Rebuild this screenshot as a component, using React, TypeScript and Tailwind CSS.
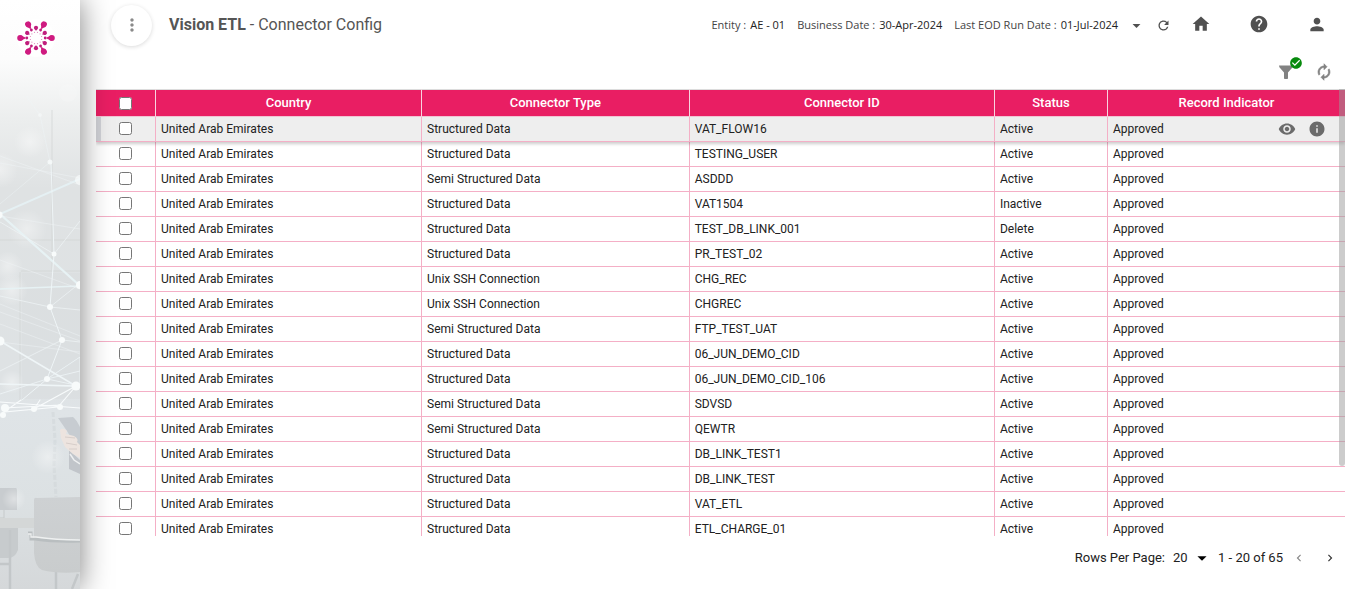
import type { ReactNode } from "react";
import {
  MdArrowDropDown,
  MdCheckCircle,
  MdChevronLeft,
  MdChevronRight,
  MdHelp,
  MdHome,
  MdInfo,
  MdMoreVert,
  MdPerson,
  MdRefresh,
  MdVisibility,
} from "react-icons/md";

type Connector = { type: string; id: string; status: string };

const S = "Structured Data";
const SS = "Semi Structured Data";
const U = "Unix SSH Connection";

const connectors: Connector[] = [
  { type: S, id: "VAT_FLOW16", status: "Active" },
  { type: S, id: "TESTING_USER", status: "Active" },
  { type: SS, id: "ASDDD", status: "Active" },
  { type: S, id: "VAT1504", status: "Inactive" },
  { type: S, id: "TEST_DB_LINK_001", status: "Delete" },
  { type: S, id: "PR_TEST_02", status: "Active" },
  { type: U, id: "CHG_REC", status: "Active" },
  { type: U, id: "CHGREC", status: "Active" },
  { type: SS, id: "FTP_TEST_UAT", status: "Active" },
  { type: S, id: "06_JUN_DEMO_CID", status: "Active" },
  { type: S, id: "06_JUN_DEMO_CID_106", status: "Active" },
  { type: SS, id: "SDVSD", status: "Active" },
  { type: SS, id: "QEWTR", status: "Active" },
  { type: S, id: "DB_LINK_TEST1", status: "Active" },
  { type: S, id: "DB_LINK_TEST", status: "Active" },
  { type: S, id: "VAT_ETL", status: "Active" },
  { type: S, id: "ETL_CHARGE_01", status: "Active" },
];

function Logo() {
  return (
    <svg viewBox="0 0 40 40" className="size-10" role="img" aria-label="Vision home">
      <circle cx="20" cy="20" r="19" fill="#fff" />
      {[0, 60, 120, 180, 240, 300].map((a) => (
        <g key={a} transform={`rotate(${a} 20 20)`} fill="#cf1b80">
          <circle cx="35.8" cy="20" r="3" />
          <path d="M35 17.6 L30.6 19.6 V20.4 L35 22.4 Z" />
        </g>
      ))}
      {[15, 45, 75, 105, 135, 165, 195, 225, 255, 285, 315, 345].map((a) => (
        <circle key={a} cx="25.8" cy="20" r="0.6" fill="#c01f7d" opacity="0.5" transform={`rotate(${a} 20 20)`} />
      ))}
      {[30, 90, 150, 210, 270, 330].map((a) => (
        <g key={a} transform={`rotate(${a} 20 20)`} fill="#c01f7d">
          <circle cx="30.2" cy="20" r="2.1" />
          <path d="M29.6 18.6 L27 20 L29.6 21.4 Z" />
        </g>
      ))}
      {[0, 60, 120, 180, 240, 300].map((a) => (
        <circle key={a} cx="29.2" cy="20" r="1.4" fill="#c01f7d" transform={`rotate(${a} 20 20)`} />
      ))}
    </svg>
  );
}

function FunnelIcon() {
  return (
    <svg viewBox="0 0 14 14" className="size-3.5" fill="currentColor" aria-hidden="true">
      <path d="M0 0.5H14L13.6 2.2L9 7.5V13.2Q9 14 8.2 14H5.8Q5 14 5 13.2V7.5L0.4 2.2Z" />
    </svg>
  );
}

function RenewIcon() {
  return (
    <svg viewBox="0 0 24 24" className="size-[18px]" fill="currentColor" stroke="currentColor" strokeWidth="0.8" aria-hidden="true">
      <path d="M12 6v3l4-4-4-4v3c-4.42 0-8 3.58-8 8 0 1.57.46 3.03 1.24 4.26L6.7 14.8A5.87 5.87 0 0 1 6 12c0-3.31 2.69-6 6-6z" />
      <path d="M18.76 7.74L17.3 9.2c.44.84.7 1.79.7 2.8 0 3.31-2.69 6-6 6v-3l-4 4 4 4v-3c4.42 0 8-3.58 8-8 0-1.57-.46-3.03-1.24-4.26z" />
    </svg>
  );
}

function SidebarArt() {
  return (
    <svg viewBox="0 0 80 589" preserveAspectRatio="none" className="absolute inset-0 h-full w-full" aria-hidden="true">
      <defs>
        <linearGradient id="base" x1="0" y1="0" x2="0" y2="1">
          <stop offset="0" stopColor="#ffffff" />
          <stop offset="0.1" stopColor="#fcfcfc" />
          <stop offset="0.2" stopColor="#eceeee" />
          <stop offset="0.32" stopColor="#dfe2e3" />
          <stop offset="0.65" stopColor="#dee2e4" />
          <stop offset="0.7" stopColor="#dfe4e7" />
          <stop offset="0.85" stopColor="#dce1e3" />
          <stop offset="1" stopColor="#d5d8da" />
        </linearGradient>
        <radialGradient id="glow">
          <stop offset="0" stopColor="#fff" stopOpacity="0.4" />
          <stop offset="1" stopColor="#fff" stopOpacity="0" />
        </radialGradient>
        <linearGradient id="chair" x1="0" y1="0" x2="0" y2="1">
          <stop offset="0" stopColor="#ced1d3" />
          <stop offset="1" stopColor="#c9cccd" />
        </linearGradient>
      </defs>
      <rect width="80" height="589" fill="url(#base)" />
      <path d="M52 110V272M0 240H80M20 272V400M21 271H80" stroke="#d1d5d6" strokeWidth="1.5" fill="none" opacity="0.5" />
      <rect x="22" y="273" width="58" height="126" fill="#d9dddf" opacity="0.55" />
      <circle cx="68" cy="93" r="9" fill="#fff" opacity="0.15" />
      <circle cx="30" cy="142" r="16" fill="url(#glow)" />
      <circle cx="0" cy="170" r="18" fill="url(#glow)" />
      <circle cx="27" cy="229" r="20" fill="url(#glow)" />
      <circle cx="8" cy="266" r="15" fill="url(#glow)" />
      <circle cx="12" cy="290" r="16" fill="url(#glow)" />
      <circle cx="12" cy="382" r="12" fill="url(#glow)" />
      <g fill="none" stroke="#eff5f7" strokeLinecap="round">
        <path d="M27 97L40 115L50 162L0 204" strokeWidth="0.7" opacity="0.6" />
        <path d="M80 179L0 214" strokeWidth="2" stroke="#e5f0f3" />
        <path d="M0 214L79 285" strokeWidth="2.2" stroke="#e7f2f4" />
        <path d="M0 289L79 286" strokeWidth="1.6" stroke="#e7f2f4" />
        <path d="M51 162L54 254L50 307L62 340L47 379L22 400" strokeWidth="1" />
        <path d="M80 221L54 254L0 222M80 283L50 307L0 296M50 307L80 310" strokeWidth="0.7" />
        <path d="M0 156L80 185M0 163L80 178M0 216L80 229M0 260L80 289M0 304L80 336M0 312L80 341M0 324L80 354M0 342L80 352" strokeWidth="0.7" opacity="0.65" />
        <path d="M0 371L62 340M62 340L80 342" strokeWidth="0.7" />
        <path d="M0 384L76 386L0 341" strokeWidth="1.7" />
        <path d="M47 379L80 386L80 357L47 379L80 371M0 394L47 379" strokeWidth="0.8" />
        <path d="M76 386L58 407L4 412L21 400M76 386L32 410M0 402L80 408M4 408L60 405M40 400L34 409" strokeWidth="1.1" stroke="#f8fbfc" />
      </g>
      <g fill="#f8fbfb">
        <circle cx="40" cy="115" r="2" opacity="0.5" />
        <circle cx="50" cy="162" r="2.5" opacity="0.8" />
        <circle cx="80" cy="180" r="5" opacity="0.7" />
        <circle cx="-1" cy="215" r="3.5" />
        <circle cx="54" cy="254" r="2.5" />
        <circle cx="80" cy="285" r="4" />
        <circle cx="50" cy="307" r="3" />
        <circle cx="62" cy="340" r="3" />
        <circle cx="0" cy="341" r="4.5" />
        <circle cx="47" cy="379" r="3" />
        <circle cx="76" cy="386" r="4.5" />
        <circle cx="5" cy="408" r="4" />
        <circle cx="3" cy="415" r="3" />
        <circle cx="34" cy="409" r="3" />
        <circle cx="60" cy="407" r="3" />
      </g>
      <path d="M53 412L55 440L54 465L56 497" stroke="#c9ced1" strokeWidth="3" strokeDasharray="5 2" fill="none" opacity="0.35" />
      <circle cx="48" cy="457" r="17" fill="url(#glow)" />
      <path d="M69 450L80 460V474L69 469Z" fill="#c1c5ca" />
      <path d="M70 454L74 460L80 464" stroke="#eef0f1" strokeWidth="1.5" fill="none" />
      <path d="M58 418L73 417Q76 419 80 427V456L77 448L67 431Z" fill="#c7ccd1" />
      <path d="M60 430Q63 427 67 431L66 434L74 436Q79 439 77 442L80 445V458L73 454L65 447L61 438Z" fill="#ede4df" />
      <path d="M65 437L75 438M66 443L77 445M69 449L77 449" stroke="#d7ceca" strokeWidth="1" />
      <path d="M0 488H16Q17 488 17 491V510H0Z" fill="#c8cccf" />
      <circle cx="14" cy="499" r="12" fill="url(#glow)" />
      <path d="M4 510V518H0" stroke="#c6cacb" fill="none" />
      <rect x="0" y="518" width="34" height="10" fill="#d4d7d7" />
      <path d="M0 528H18V550Q15 558 8 558H0Z" fill="#c7cbcd" />
      <path d="M10 530V589M0 564H10M56 572V589M78 574L72 589" stroke="#c3c7c9" strokeWidth="2.5" fill="none" />
      <path d="M34 500Q34 497 37 498L80 497V572Q58 574 42 570Q35 567 34 553Z" fill="url(#chair)" />
      <path d="M28 533H31V539H35Q55 542 80 541" stroke="#b9bec0" strokeWidth="3" fill="none" />
      <path d="M28 534H31V537H36Q56 540 80 540" stroke="#eef0f0" strokeWidth="1.3" fill="none" />
    </svg>
  );
}

function IconButton({ label, children, className = "" }: { label: string; children: ReactNode; className?: string }) {
  return (
    <button type="button" aria-label={label} className={`flex shrink-0 items-center justify-center ${className}`}>
      {children}
    </button>
  );
}

function Tick({ label }: { label: string }) {
  return <input type="checkbox" aria-label={label} className="mx-auto block size-[13px]" />;
}

function Fact({ label, value }: { label: string; value: string }) {
  return (
    <span className="flex gap-1">
      <span>{label} :</span>
      <span className="font-medium text-[#222]">{value}</span>
    </span>
  );
}

const th = "border-y border-r border-t-[#dcdcdc] border-b-[#f3c6d5] border-r-[#f8d3df] p-0 text-[13px] font-medium last:border-r-0";
const td = "h-[25px] border-b border-r border-[#f4afc6] py-0 pl-[5px] pr-2 last:border-r-0";

export default function App() {
  return (
    <div className="flex h-screen overflow-hidden bg-white font-['Roboto',sans-serif] text-[#212121]">
      <aside className="relative z-10 w-20 shrink-0 shadow-[0_0_30px_rgba(0,0,0,0.5)]">
        <SidebarArt />
        <a href="#home" className="relative mx-auto mt-[18px] block w-10 -translate-x-1">
          <Logo />
        </a>
      </aside>

      <main className="flex min-w-0 flex-1 flex-col pl-4 pr-[15px]">
        <header className="flex h-[50px] shrink-0 items-center pl-[15px]">
          <IconButton label="Open menu" className="size-[41px] rounded-full bg-white text-[#8a8a8a] shadow-[0_1px_4px_rgba(0,0,0,0.15)]">
            <MdMoreVert size={20} />
          </IconButton>
          <h1 className="ml-[17px] flex-1 whitespace-nowrap text-base text-[#555]">
            <b className="font-bold">Vision ETL</b> - Connector Config
          </h1>
          <div className="flex items-center gap-3 whitespace-nowrap font-['Open_Sans',sans-serif] text-[11px] text-[#444]">
            <Fact label="Entity" value="AE - 01" />
            <Fact label="Business Date" value="30-Apr-2024" />
            <Fact label="Last EOD Run Date" value="01-Jul-2024" />
          </div>
          <nav className="flex items-center text-[#505050]">
            <IconButton label="Choose date" className="ml-2 w-5"><MdArrowDropDown size={19} /></IconButton>
            <IconButton label="Reload" className="ml-[7px] w-5"><MdRefresh size={15} /></IconButton>
            <IconButton label="Home" className="ml-[18px] w-5 pb-0.5"><MdHome size={20} /></IconButton>
            <IconButton label="Help" className="ml-[38px] w-5 pb-0.5"><MdHelp size={20} /></IconButton>
            <IconButton label="Account" className="ml-[38px] mr-[18px] w-5 pb-0.5"><MdPerson size={21} /></IconButton>
          </nav>
        </header>

        <div className="flex h-[39px] shrink-0 items-center justify-end gap-5 pr-3 pt-1 text-[#828282]">
          <IconButton label="Filter" className="relative size-[18px]">
            <FunnelIcon />
            <MdCheckCircle size={14} className="absolute -right-2 -top-[7px] text-[#078a0d]" />
          </IconButton>
          <IconButton label="Refresh table" className="size-[18px]">
            <RenewIcon />
          </IconButton>
        </div>

        <div className="relative min-h-0 flex-1 overflow-hidden">
          <table className="w-full table-fixed border-separate border-spacing-0 text-left text-xs">
            <thead>
              <tr className="h-7 bg-[#e91e63] text-center text-white">
                <th className={`${th} w-[60px]`}><Tick label="Select all" /></th>
                <th className={`${th} w-[21.3%]`}>Country</th>
                <th className={`${th} w-[21.43%]`}>Connector Type</th>
                <th className={`${th} w-[24.44%]`}>Connector ID</th>
                <th className={`${th} w-[9.05%]`}>Status</th>
                <th className={th}>Record Indicator</th>
              </tr>
            </thead>
            <tbody>
              {connectors.map((c, i) => (
                <tr key={c.id} className={i === 0 ? "relative bg-[#eeeeee] shadow-[0_2px_3px_rgba(0,0,0,0.2)]" : ""}>
                  <td className={`h-[25px] border-b border-r border-[#f4afc6] p-0 pb-px ${i === 0 ? "shadow-[inset_5px_0_0_#d0d1d6]" : ""}`}>
                    <Tick label={`Select ${c.id}`} />
                  </td>
                  <td className={td}>United Arab Emirates</td>
                  <td className={td}>{c.type}</td>
                  <td className={td}>{c.id}</td>
                  <td className={td}>{c.status}</td>
                  <td className={td}>
                    <div className="flex items-center justify-between">
                      Approved
                      {i === 0 && (
                        <span className="flex gap-3 pr-[11px] text-[#6b6b6b]">
                          <IconButton label="View" className="h-4 w-[18px]"><MdVisibility size={18} className="shrink-0" /></IconButton>
                          <IconButton label="Details" className="h-4 w-[18px]"><MdInfo size={18} className="shrink-0" /></IconButton>
                        </span>
                      )}
                    </div>
                  </td>
                </tr>
              ))}
            </tbody>
          </table>
          <div className="absolute right-0 top-0 h-[84.4%] w-1.5 rounded-b-sm bg-[#999]/50" />
        </div>

        <footer className="flex h-[53px] shrink-0 items-center justify-end pb-2.5 pr-[7px] text-[13px]">
          <label htmlFor="rows">Rows Per Page:</label>
          <span className="relative ml-2 flex items-center">
            <select id="rows" defaultValue="20" className="w-9 appearance-none bg-transparent">
              <option>10</option>
              <option>20</option>
              <option>50</option>
            </select>
            <MdArrowDropDown size={22} className="pointer-events-none absolute -right-1 text-black" />
          </span>
          <span className="ml-[9px]">1 - 20 of 65</span>
          <IconButton label="Previous page" className="ml-2 w-4 text-[#888]"><MdChevronLeft size={14} /></IconButton>
          <IconButton label="Next page" className="ml-[15px] w-4 text-[#333]"><MdChevronRight size={14} /></IconButton>
        </footer>
      </main>
    </div>
  );
}
